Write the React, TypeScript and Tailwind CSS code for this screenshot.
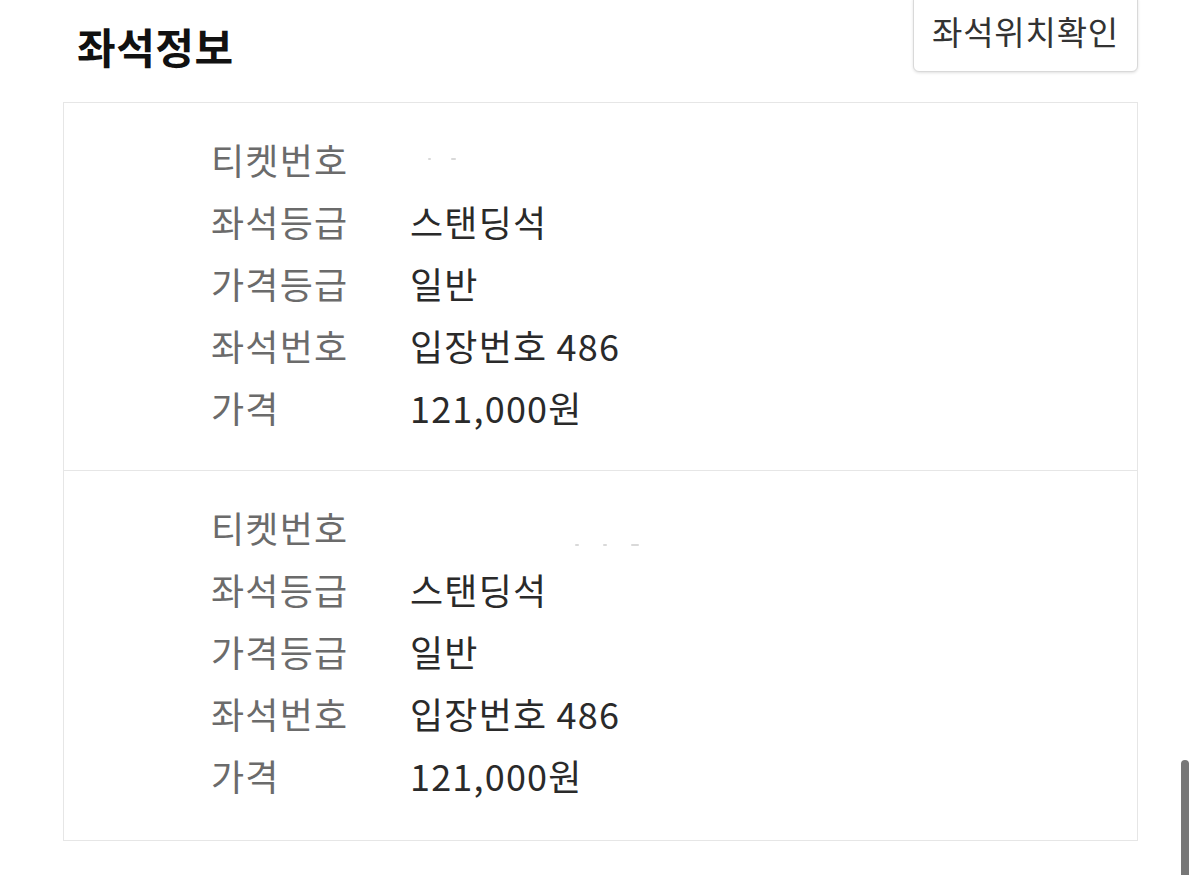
import React from "react";

const font = { fontFamily: '"Noto Sans CJK KR", "Noto Sans", sans-serif' };

type Row = { label: string; value: React.ReactNode };

function Section({ rows, last }: { rows: Row[]; last?: boolean }) {
  return (
    <div
      className={
        "pl-[147px] pt-[25px] " +
        (last ? "pb-[34px]" : "pb-[32px] border-b border-[#e6e6e6]")
      }
    >
      {rows.map((r, i) => (
        <div key={i} className="flex h-[62px] items-center text-[36px] leading-[62px] tracking-[1.2px]">
          <div className="w-[199px] shrink-0 text-[#6b6b6b]">{r.label}</div>
          <div className="text-[#2a2a2a]">{r.value}</div>
        </div>
      ))}
    </div>
  );
}

function Smudge({ className }: { className: string }) {
  return <span className={"inline-block rounded-full bg-[#d9d9d9] " + className} />;
}

export default function App() {
  const rows1: Row[] = [
    {
      label: "티켓번호",
      value: (
        <span className="flex items-center gap-[20px] pl-[18px]">
          <Smudge className="h-[2px] w-[3px]" />
          <Smudge className="h-[2px] w-[5px] bg-[#aaaaaa]" />
        </span>
      ),
    },
    { label: "좌석등급", value: "스탠딩석" },
    { label: "가격등급", value: "일반" },
    { label: "좌석번호", value: "입장번호 486" },
    { label: "가격", value: "121,000원" },
  ];
  const rows2: Row[] = [
    {
      label: "티켓번호",
      value: (
        <span className="flex items-center gap-[24px] pl-[165px] pt-[36px]">
          <Smudge className="h-[2px] w-[4px]" />
          <Smudge className="h-[2px] w-[4px]" />
          <Smudge className="h-[2px] w-[8px] bg-[#c4c4c4]" />
        </span>
      ),
    },
    { label: "좌석등급", value: "스탠딩석" },
    { label: "가격등급", value: "일반" },
    { label: "좌석번호", value: "입장번호 486" },
    { label: "가격", value: "121,000원" },
  ];

  return (
    <div className="relative h-[875px] w-[1200px] overflow-hidden bg-white" style={font}>
      <div className="px-[63px] pr-[62px]">
        <div className="flex h-[102px] items-start justify-between">
          <h1 className="ml-[14px] mt-[19px] text-[42px] font-bold leading-[54px] tracking-[0.5px] text-[#111111]">
            좌석정보
          </h1>
          <button className="mt-[-6px] flex h-[78px] w-[225px] items-center justify-center rounded-[6px] border border-[#d9d9d9] bg-white pb-[2px] text-[33px] tracking-[0.8px] text-[#333333] shadow-[0_1px_3px_rgba(0,0,0,0.12)]">
            좌석위치확인
          </button>
        </div>
        <div className="border border-[#e6e6e6]">
          <Section rows={rows1} />
          <Section rows={rows2} last />
        </div>
      </div>
      <div className="absolute left-[1181px] top-[760px] h-[130px] w-[8px] rounded-full bg-[#777777]" />
    </div>
  );
}
